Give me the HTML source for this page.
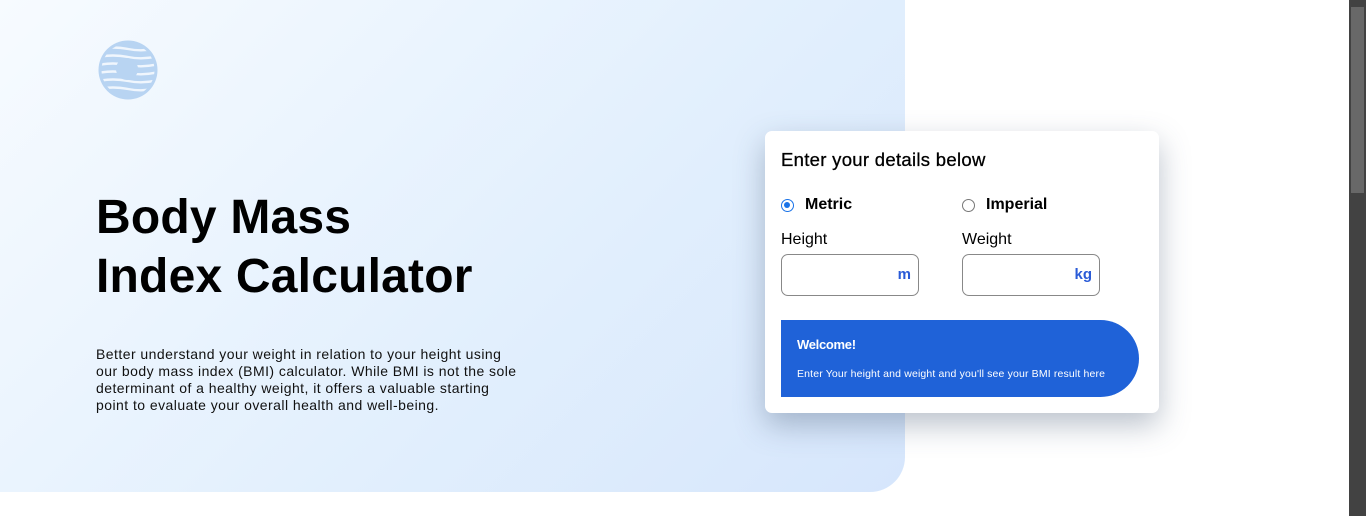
<!DOCTYPE html>
<html><head><style>
*{margin:0;padding:0;box-sizing:border-box}
body{width:1366px;height:516px;overflow:hidden;background:#fff;font-family:"Liberation Sans",sans-serif;position:relative}
.hero{position:absolute;left:0;top:0;width:905px;height:492px;border-bottom-right-radius:35px;background:linear-gradient(135deg,#f7fbff 0%,#e3f0fd 55%,#d6e6fc 100%)}
h1{position:absolute;left:96px;top:188px;font-size:48px;line-height:59px;font-weight:700;color:#000;letter-spacing:0.2px}
p.d{position:absolute;left:96px;top:346px;width:422px;font-size:14px;line-height:17px;color:#111;letter-spacing:0.45px}
.card{position:absolute;left:765px;top:131px;width:394px;height:282px;background:#fff;border-radius:7px;box-shadow:0 12px 30px rgba(60,80,110,.35)}
.card h2{position:absolute;left:16px;top:18px;font-size:18.5px;font-weight:400;color:#000;letter-spacing:0.3px;-webkit-text-stroke:0.3px #000}
.rad{position:absolute;top:65px;font-size:16px;font-weight:700;display:flex;align-items:center}
.rad i{width:13px;height:13px;border-radius:50%;border:1px solid #777;margin-right:11px;display:inline-block;position:relative}
.rad i.on{border:1.5px solid #1a73e8}
.rad i.on:after{content:"";position:absolute;left:2px;top:2px;width:6px;height:6px;border-radius:50%;background:#1a73e8}
.lab{position:absolute;top:100px;font-size:16px;color:#000}
.inp{position:absolute;top:123px;width:138px;height:42px;border:1px solid #888;border-radius:7px;font-size:15px;font-weight:700;color:#2a5bd7;text-align:right;padding:11px 7px 0 0}
.wel{position:absolute;left:16px;top:189px;width:358px;height:77px;background:#1f62d8;border-radius:0 40px 40px 0;color:#fff}
.wel b{position:absolute;left:16px;top:17px;font-size:13px;letter-spacing:-0.3px}
.wel span{position:absolute;left:16px;top:48px;font-size:10.5px;letter-spacing:0.15px}
.sb{position:absolute;left:1349px;top:0;width:17px;height:516px;background:#424242}
.th{position:absolute;left:1351px;top:7px;width:13px;height:186px;background:#686868}
</style></head><body>
<div class="hero"></div>
<svg style="position:absolute;left:98px;top:40px" width="60" height="60" viewBox="0 0 60 60">
<defs><clipPath id="c"><circle cx="30" cy="30" r="26.5"/></clipPath></defs>
<circle cx="30" cy="30" r="29.5" fill="#b8d4f2"/>
<g clip-path="url(#c)" stroke="#f0f6fd" stroke-width="2.4" fill="none">
<path d="M0 9 Q15 6 30 9 T60 8"/><path d="M0 17 Q15 14 30 17 T60 16"/><path d="M0 25 Q15 22 30 25 T60 24"/><path d="M0 33 Q15 30 30 33 T60 32"/><path d="M0 41 Q15 38 30 41 T60 40"/><path d="M0 49 Q15 46 30 49 T60 48"/>
</g>
<circle cx="29" cy="29" r="11" fill="#b8d4f2"/>
</svg>
<h1>Body Mass<br>Index Calculator</h1>
<p class="d">Better understand your weight in relation to your height using our body mass index (BMI) calculator. While BMI is not the sole determinant of a healthy weight, it offers a valuable starting point to evaluate your overall health and well-being.</p>
<div class="card">
<h2>Enter your details below</h2>
<div class="rad" style="left:16px"><i class="on"></i>Metric</div>
<div class="rad" style="left:197px"><i></i>Imperial</div>
<div class="lab" style="left:16px">Height</div>
<div class="lab" style="left:197px">Weight</div>
<div class="inp" style="left:16px">m</div>
<div class="inp" style="left:197px">kg</div>
<div class="wel"><b>Welcome!</b><span>Enter Your height and weight and you'll see your BMI result here</span></div>
</div>
<div class="sb"></div><div class="th"></div>
</body></html>
